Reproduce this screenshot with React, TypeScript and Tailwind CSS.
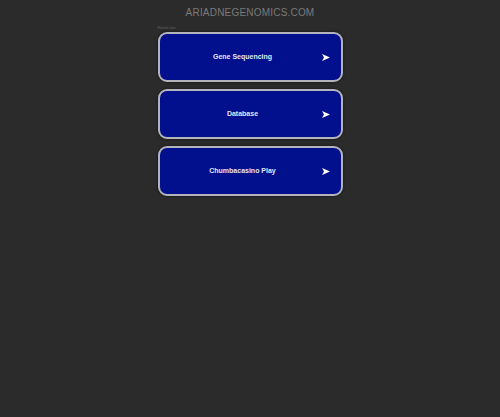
import React from 'react'

const links = ['Gene Sequencing', 'Database', 'Chumbacasino Play']

function LinkButton({ label }: { label: string }) {
  return (
    <a
      href="#"
      className="flex h-[50px] items-center rounded-[9px] border-2 border-[#b4b4bc] bg-[#02108e] pl-[4px] pr-[11px] shadow-[0_0_3px_rgba(0,0,0,0.6)]"
    >
      <span className="flex-1 text-center text-[7px] font-bold text-[#e4e4f0]">{label}</span>
      <svg width="8" height="7" viewBox="0 0 8 7" className="shrink-0">
        <path d="M0 0 L8 3.5 L0 7 L2 3.5 Z" fill="#ffffff" />
      </svg>
    </a>
  )
}

export default function App() {
  return (
    <div className="min-h-[417px] w-full bg-[#2b2b2b] font-['Liberation_Sans',Arial,sans-serif]">
      <div className="pt-[7px] text-center text-[10px] leading-[12px] tracking-[0.2px] text-[#7a7a7a]">
        ARIADNEGENOMICS.COM
      </div>
      <div className="mx-auto w-[185px]">
        <div className="mt-[7px] text-[3px] leading-[4px] text-[#666]">Related Links</div>
        <div className="mt-[2px] flex flex-col gap-[7px]">
          {links.map((l) => (
            <LinkButton key={l} label={l} />
          ))}
        </div>
      </div>
    </div>
  )
}
